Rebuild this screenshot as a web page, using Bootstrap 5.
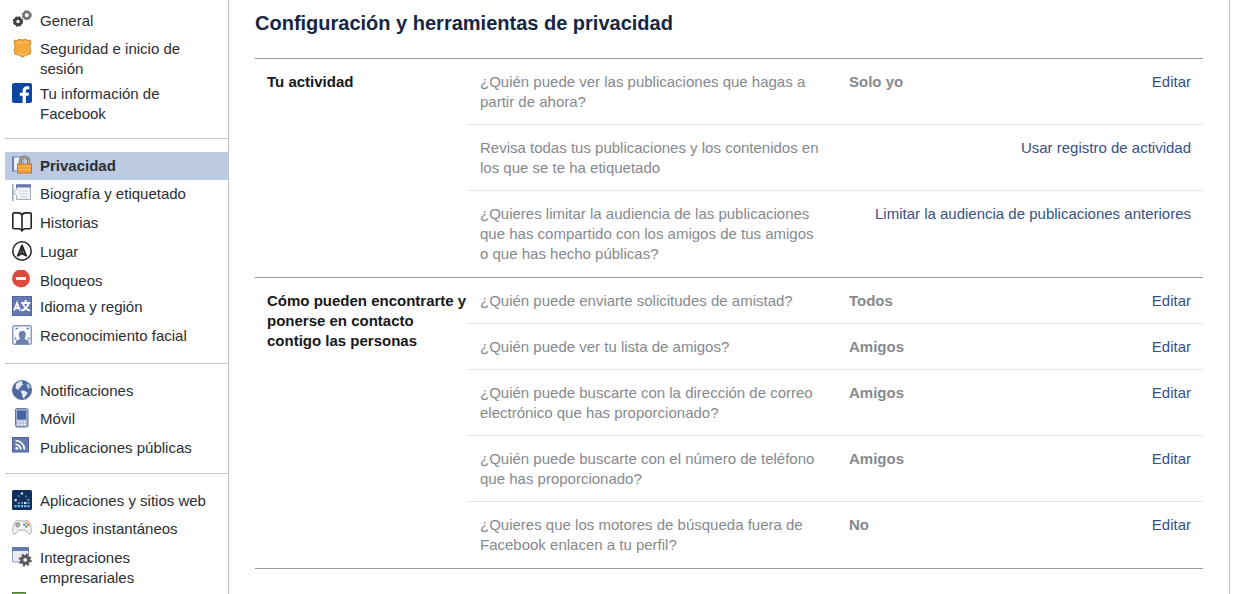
<!DOCTYPE html>
<html lang="es">
<head>
<meta charset="utf-8">
<meta name="viewport" content="width=device-width, initial-scale=1">
<title>Configuración y herramientas de privacidad</title>
<link href="https://cdn.jsdelivr.net/npm/bootstrap@5.3.0/dist/css/bootstrap.min.css" rel="stylesheet">
<style>
  body { font-family: "Liberation Sans", Arial, sans-serif; font-size: 15px; line-height: 20px; color: #1d2129; background: #fff; }
  .shell { padding: 0 6px 0 5px; }
  .sidebar { flex: 0 0 224px; border-right: 1px solid #bcbec2; padding-top: 7px; }
  .side-group { padding: 13px 0; }
  .side-group:first-child { padding: 0 0 14px; }
  .side-group.compact { padding-bottom: 11px; }
  .side-group + .side-group { border-top: 1px solid #c4c5c8; }
  .side-item + .side-item + .side-item { margin-top: 1px; }
  .side-link { gap: 8px; padding: 4px 12px 4px 7px; color: #2b2e33; text-decoration: none; }
  .side-link.two-line { padding-bottom: 0; }
  .side-link.tight { padding-bottom: 1px; }
  .side-link.active { background: #bccbe1; font-weight: 700; }
  .side-link svg { flex: none; width: 20px; height: 20px; margin-top: -1px; }
  .content-pane { border-right: 1px solid #bcbec2; padding: 11px 26px 0; }
  .page-title { font-size: 20px; line-height: 24px; font-weight: 700; color: #162643; margin: 0 0 23px; }
  .settings { table-layout: fixed; border-collapse: separate; border-spacing: 0; border-top: 1px solid #96999e; }
  .settings th, .settings td { padding: 13px 12px 12px 13px; vertical-align: top; border-bottom: 1px solid #e3e4e6; }
  .settings th { padding-left: 12px; padding-right: 0; color: #16181c; border-bottom-color: #96999e; }
  .settings tr:last-child td { padding-bottom: 13px; border-bottom-color: #96999e; }
  .settings td { color: #86898e; }
  .settings a { color: #385185; text-decoration: none; }
  .settings a:hover { text-decoration: underline; }
  .col-section { width: 212px; }
  .col-question { width: 369px; }
  .col-action { width: 100px; }
</style>
</head>
<body>
<div class="shell d-flex vh-100 overflow-hidden">
  <nav class="sidebar" aria-label="Configuración">
    <ul class="side-group list-unstyled mb-0">
      <li class="side-item"><a class="side-link d-flex" href="#">
        <svg viewBox="0 0 20 20" fill="none"><circle cx="6" cy="11.500" r="3.200" stroke="#454545" stroke-width="3"/><circle cx="6" cy="11.500" r="4.600" stroke="#454545" stroke-width="1.200" stroke-dasharray="2 1.610"/><circle cx="14.800" cy="5.200" r="3.200" stroke="#767676" stroke-width="2.600"/><circle cx="14.800" cy="5.200" r="4.500" stroke="#6a6a6a" stroke-width="1" stroke-dasharray="2 1.530"/></svg>
        <span>General</span></a></li>
      <li class="side-item"><a class="side-link two-line d-flex" href="#">
        <svg viewBox="0 0 20 20"><path d="M2.800 2 5 2.700 7 1.200 10.500 2 14 1.200 16 2.700 18.200 2 19 5.200 17.800 8.500 18.900 12.500 18 16.200 13.500 17.300 10.500 19.200 7.500 17.300 3 16.200 2.100 12.500 3.200 8.500 2 5.200Z" fill="#f5a83c" stroke="#c98c3c" stroke-width="1"/><path d="M5 4.500h11M5.500 15l5 2 5-2" stroke="#ffc169" fill="none"/></svg>
        <span>Seguridad e inicio de sesión</span></a></li>
      <li class="side-item"><a class="side-link two-line d-flex" href="#">
        <svg viewBox="0 0 20 20"><rect width="20" height="20" rx="2" fill="#0b47a1"/><path d="M10.600 20v-7.200H7.800V9.700h2.800V7.800c0-3 1.800-4.600 4.500-4.600.8 0 1.600.1 2.200.2v2.900h-1.700c-1.300 0-1.700.8-1.700 1.700v1.700H17l-.5 3.100h-2.600V20Z" fill="#fff"/></svg>
        <span>Tu información de Facebook</span></a></li>
    </ul>
    <ul class="side-group list-unstyled mb-0">
      <li class="side-item"><a class="side-link active d-flex" href="#" aria-current="page">
        <svg viewBox="0 0 20 20"><path d="M1 2h10v14H1Z" fill="#eef2fa" stroke="#7b8fb8"/><path d="M1 1.500v15" stroke="#6b82b2" stroke-width="2"/><path d="M8.300 10V6.200a4.200 4.200 0 0 1 8.400 0V10" fill="none" stroke="#817b70" stroke-width="3.200"/><path d="M8.300 10V6.200a4.200 4.200 0 0 1 8.400 0V10" fill="none" stroke="#bdb8ae" stroke-width="1"/><rect x="5.500" y="9" width="14" height="9" fill="#f4a13b" stroke="#b8782b"/><path d="M6 11.500h13M6 14.500h13" stroke="#ffb65a"/></svg>
        <span>Privacidad</span></a></li>
      <li class="side-item"><a class="side-link d-flex" href="#">
        <svg viewBox="0 0 20 20"><path d="M.8 1v17" stroke="#9aa0ac" stroke-width="1.500"/><path d="M4.500 3h14v13.500h-14v-4L1.500 9.200 4.500 6Z" fill="#f1f2f5" stroke="#a3abbc"/><path d="M4 1.200h15v3.300H4Z" fill="#6577ae"/><path d="M7.500 8H16M7.500 11H16M7.500 14H16" stroke="#d3d6dc"/></svg>
        <span>Biografía y etiquetado</span></a></li>
      <li class="side-item"><a class="side-link d-flex" href="#">
        <svg viewBox="0 0 20 20" fill="none" stroke="#252525" stroke-width="1.600" stroke-linejoin="round"><path d="M10 3.200C9.400 1.500 8.200.9 6.500.9H2Q.8.9.8 2.200v13.200q0 1.300 1.200 1.300h4.400c1.800 0 3 .7 3.600 2.400.6-1.700 1.800-2.400 3.600-2.400H18q1.200 0 1.200-1.300V2.200Q19.200.9 18 .9h-4.500c-1.700 0-2.900.6-3.500 2.300ZM10 3.200v15.500"/></svg>
        <span>Historias</span></a></li>
      <li class="side-item"><a class="side-link d-flex" href="#">
        <svg viewBox="0 0 20 20"><circle cx="10" cy="10" r="9.200" fill="none" stroke="#252525" stroke-width="1.500"/><path d="M10 4.300 14.300 14.800 10 12.600 5.700 14.800Z" fill="#777" stroke="#222" stroke-width="1.700" stroke-linejoin="round"/><path d="M10 5v7.500" stroke="#222" stroke-width="1.300"/></svg>
        <span>Lugar</span></a></li>
      <li class="side-item"><a class="side-link tight d-flex" href="#">
        <svg viewBox="0 0 20 20"><circle cx="9" cy="8.500" r="9" fill="#da4c3d"/><rect x="4" y="7" width="10" height="3" rx=".5" fill="#fff0e8"/></svg>
        <span>Bloqueos</span></a></li>
      <li class="side-item"><a class="side-link d-flex" href="#">
        <svg viewBox="0 0 20 20"><rect x=".5" y=".5" width="19" height="19" fill="#6379b0" stroke="#5068a2"/><path d="M2 14.500 5 7 8 14.500M3.300 12h3.500" fill="none" stroke="#fff" stroke-width="1.800"/><path d="M13.600 4v2.500M9.300 7h8.900M11 7.500c1 3.300 3.200 6 7 7.200M16.500 7.500c-.8 3.500-3.200 6-7.200 7.200" fill="none" stroke="#fff" stroke-width="1.900"/></svg>
        <span>Idioma y región</span></a></li>
      <li class="side-item"><a class="side-link d-flex" href="#">
        <svg viewBox="0 0 20 20"><rect x=".7" y=".7" width="18.600" height="18.600" rx="2" fill="#f8f9fc" stroke="#8796bf" stroke-width="1.400"/><path d="M4 19v-3c.8-1 2.800-1.400 4.200-2-.6-.7-1-1.700-1.200-3-.8-3 .6-5 3.300-5s4.100 2 3.300 5c-.2 1.300-.6 2.300-1.200 3 1.400.6 3.400 1 4.200 2v3Z" fill="#6b7fb0"/><path d="M3.500 3.500H6M14.500 3.500H17M3.500 12.500v2M16.800 12.500v2" stroke="#6b7fb0" stroke-width="1.600"/></svg>
        <span>Reconocimiento facial</span></a></li>
    </ul>
    <ul class="side-group compact list-unstyled mb-0">
      <li class="side-item"><a class="side-link d-flex" href="#">
        <svg viewBox="0 0 20 20"><circle cx="10" cy="10" r="9.600" fill="#4e69a2" stroke="#43598c" stroke-width=".7"/><path d="M4 4 7 1.500l3.500-.4-.5 2 1.500 1.400-2.500 1.500-.8 2L6 8.700l1.200 1.500-1.500-.3L3.500 8Z" fill="#e3e9f4"/><path d="m8.500 10.800 3.500-.3 3.500 2-.8 2.500-1.700 1.200-.7 2.300-1.800-1-.3-3Z" fill="#e3e9f4"/><path d="m14.500 3.500 2.200.8 1.800 3.200-1.500 1.300-2-1.300Z" fill="#b9c6de"/></svg>
        <span>Notificaciones</span></a></li>
      <li class="side-item"><a class="side-link d-flex" href="#">
        <svg viewBox="0 0 20 20"><rect x="3.500" y=".5" width="12.500" height="18.500" rx="1.500" fill="#a3b0cd" stroke="#6073a0"/><rect x="5.700" y="3" width="8" height="8" fill="#4565a4" stroke="#39568f" stroke-width=".7"/><path d="M5.500 13.500H14M5.500 16.500H14" stroke="#eef1f7" stroke-width="1.800" stroke-dasharray="2.200 .9"/></svg>
        <span>Móvil</span></a></li>
      <li class="side-item"><a class="side-link d-flex" href="#">
        <svg viewBox="0 0 20 20"><rect x=".5" y="0.500" width="16" height="14.500" fill="#647ab0" stroke="#4d6298"/><circle cx="4.800" cy="11.300" r="1.400" fill="#fff"/><path d="M3.500 7.300a5.300 5.300 0 0 1 5.300 5.300M3.500 3.600a9 9 0 0 1 9 9" fill="none" stroke="#fff" stroke-width="1.700"/></svg>
        <span>Publicaciones públicas</span></a></li>
    </ul>
    <ul class="side-group list-unstyled mb-0">
      <li class="side-item"><a class="side-link d-flex" href="#">
        <svg viewBox="0 0 20 20"><rect width="20" height="20" rx="1.500" fill="#14305a"/><path d="M2.500 16.200h2.200M5.700 16.200h2.200M8.900 16.200h2.200M12.100 16.200h2.200M15.300 16.200h2.200" stroke="#6fc0ee" stroke-width="2.200"/><path d="M5.700 13h2.200M8.900 13h2.200M12.100 13h2.200M15.300 13h2.200M15.300 9.800h2.200" stroke="#4c8dc2" stroke-width="2.200"/><path d="M8.900 3.500h2.200M2.500 10.200h2.200M12.100 13h2.200" stroke="#e5f6ff" stroke-width="2"/><path d="M5.700 6h2M13 6.500h2" stroke="#3c6ea4" stroke-width="1.800"/></svg>
        <span>Aplicaciones y sitios web</span></a></li>
      <li class="side-item"><a class="side-link d-flex" href="#">
        <svg viewBox="0 0 20 20"><path d="M4 3c1-.8 2.500-.8 3.500 0h5c1-.8 2.500-.8 3.500 0 1.500.7 2.500 4 3.300 8.500.7 4-1.500 5.500-3.300 3.800L13.500 12h-7L4 15.300C2.200 17 0 15.500.7 11.500 1.500 7 2.500 3.700 4 3Z" fill="#f3f3f3" stroke="#aaa"/><circle cx="5.700" cy="6.800" r="2.400" fill="#777" stroke="#bbb"/><path d="M4.500 6.800h2.400M5.700 5.600V8" stroke="#ddd" stroke-width=".8"/><circle cx="14.300" cy="4.700" r="1.200" fill="#e6ae32"/><circle cx="12.300" cy="6.700" r="1.200" fill="#5c8ed0"/><circle cx="16.300" cy="6.700" r="1.200" fill="#e0674c"/><circle cx="14.300" cy="8.700" r="1.200" fill="#65ae65"/></svg>
        <span>Juegos instantáneos</span></a></li>
      <li class="side-item"><a class="side-link two-line d-flex" href="#">
        <svg viewBox="0 0 20 20"><rect x=".5" y=".5" width="16" height="14.500" rx=".8" fill="#e9ecf2" stroke="#8f9bb6"/><path d="M0 0h17v4H0Z" fill="#637cae"/><circle cx="13.200" cy="13" r="3.500" fill="none" stroke="#595959" stroke-width="3"/><circle cx="13.200" cy="13" r="5.500" fill="none" stroke="#595959" stroke-width="2" stroke-dasharray="2.160 2.160"/></svg>
        <span>Integraciones empresariales</span></a></li>
      <li class="side-item"><a class="side-link d-flex" href="#" aria-label="Anuncios">
        <svg viewBox="0 0 20 20"><path d="M.5.500h13v18H.5Z" fill="#79ab5c" stroke="#4c7d35"/></svg></a></li>
    </ul>
  </nav>

  <main class="content-pane flex-grow-1">
    <h1 class="page-title">Configuración y herramientas de privacidad</h1>
    <table class="settings w-100">
      <colgroup><col class="col-section"><col class="col-question"><col><col class="col-action"></colgroup>
      <tbody>
        <tr>
          <th scope="rowgroup" rowspan="3">Tu actividad</th>
          <td>¿Quién puede ver las publicaciones que hagas a partir de ahora?</td>
          <td class="fw-bold">Solo yo</td>
          <td class="text-end"><a href="#">Editar</a></td>
        </tr>
        <tr>
          <td>Revisa todas tus publicaciones y los contenidos en los que se te ha etiquetado</td>
          <td class="text-end" colspan="2"><a href="#">Usar registro de actividad</a></td>
        </tr>
        <tr>
          <td>¿Quieres limitar la audiencia de las publicaciones que has compartido con los amigos de tus amigos o que has hecho públicas?</td>
          <td class="text-end" colspan="2"><a href="#">Limitar la audiencia de publicaciones anteriores</a></td>
        </tr>
      </tbody>
      <tbody>
        <tr>
          <th scope="rowgroup" rowspan="5">Cómo pueden encontrarte y ponerse en contacto contigo las personas</th>
          <td>¿Quién puede enviarte solicitudes de amistad?</td>
          <td class="fw-bold">Todos</td>
          <td class="text-end"><a href="#">Editar</a></td>
        </tr>
        <tr>
          <td>¿Quién puede ver tu lista de amigos?</td>
          <td class="fw-bold">Amigos</td>
          <td class="text-end"><a href="#">Editar</a></td>
        </tr>
        <tr>
          <td>¿Quién puede buscarte con la dirección de correo electrónico que has proporcionado?</td>
          <td class="fw-bold">Amigos</td>
          <td class="text-end"><a href="#">Editar</a></td>
        </tr>
        <tr>
          <td>¿Quién puede buscarte con el número de teléfono que has proporcionado?</td>
          <td class="fw-bold">Amigos</td>
          <td class="text-end"><a href="#">Editar</a></td>
        </tr>
        <tr>
          <td>¿Quieres que los motores de búsqueda fuera de Facebook enlacen a tu perfil?</td>
          <td class="fw-bold">No</td>
          <td class="text-end"><a href="#">Editar</a></td>
        </tr>
      </tbody>
    </table>
  </main>
</div>
<script src="https://cdn.jsdelivr.net/npm/bootstrap@5.3.0/dist/js/bootstrap.bundle.min.js"></script>
</body>
</html>
